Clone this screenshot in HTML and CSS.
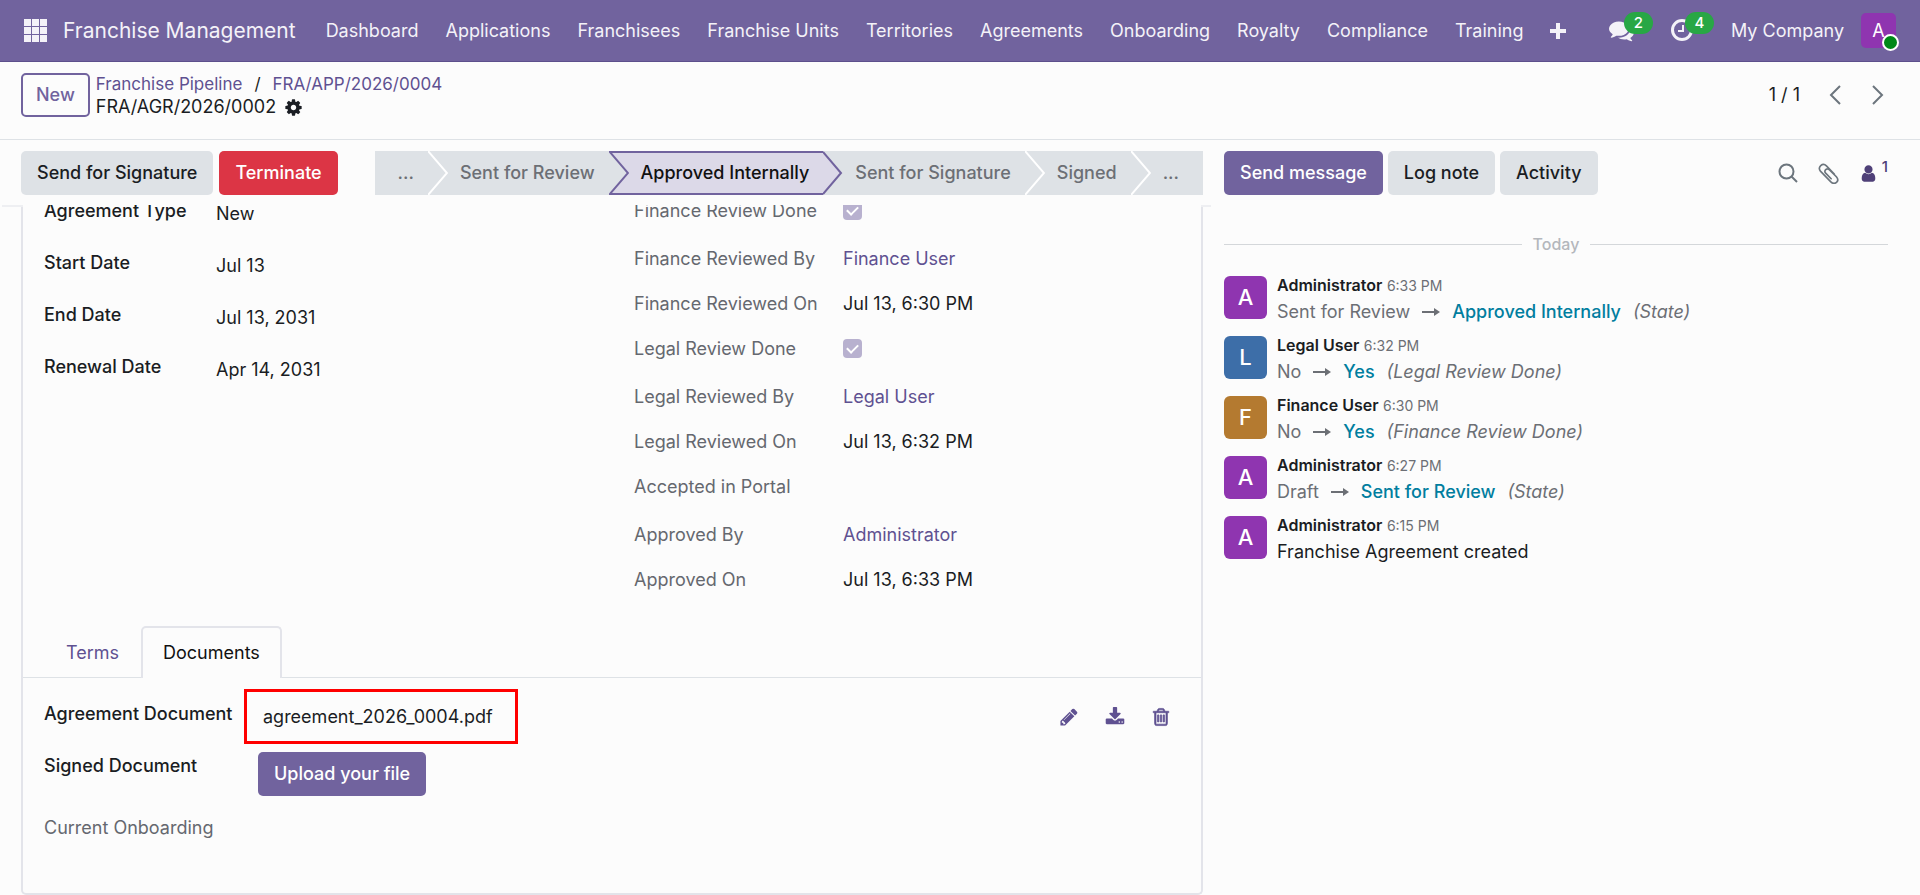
FILE: index.html
```html
<!DOCTYPE html>
<html lang="en">
<head>
  <meta charset="utf-8">
  <title>FRA/AGR/2026/0002 - Franchise Management</title>
  <link rel="stylesheet" href="styles.css">
</head>
<body>
  <header class="navbar">
    <button class="apps" aria-label="Apps">
      <svg width="23" height="23" viewBox="0 0 23 23" fill="currentColor"><path d="M0 0h7v7H0zM8 0h7v7H8zM16 0h7v7h-7zM0 8h7v7H0zM8 8h7v7H8zM16 8h7v7h-7zM0 16h7v7H0zM8 16h7v7H8zM16 16h7v7h-7z"/></svg>
    </button>
    <a class="brand" href="#">Franchise Management</a>
    <nav class="menu">
      <a href="#">Dashboard</a>
      <a href="#">Applications</a>
      <a href="#">Franchisees</a>
      <a href="#">Franchise Units</a>
      <a href="#">Territories</a>
      <a href="#">Agreements</a>
      <a href="#">Onboarding</a>
      <a href="#">Royalty</a>
      <a href="#">Compliance</a>
      <a href="#">Training</a>
      <button class="more" aria-label="More menus">
        <svg width="16" height="16" viewBox="0 0 16 16" fill="currentColor"><path d="M6 0h4v6h6v4h-6v6H6v-6H0V6h6z"/></svg>
      </button>
    </nav>
    <div class="systray">
      <button class="tray" aria-label="Messages">
        <svg width="25" height="25" viewBox="0 0 1792 1792" fill="currentColor"><path d="M1408 768q0 139-94 257t-256.5 186.5-353.5 68.5q-86 0-176-16-124 88-278 128-36 9-86 16h-3q-11 0-20.5-8t-11.5-21q-1-3-1-6.5t.5-6.5 2-6l2.5-5 3.5-5.5 4-5 4.5-5 4-4.5q5-6 23-25t26-29.5 22.5-29 25-38.5 20.5-44q-124-72-195-177t-71-224q0-139 94-257t256.5-186.5 353.5-68.5 353.5 68.5 256.5 186.5 94 257zm384 256q0 120-71 224.5t-195 176.5q10 24 20.5 44t25 38.5 22.5 29 26 29.5 23 25q1 1 4 4.5t4.5 5 4 5 3.5 5.5l2.5 5 2 6 .5 6.5-1 6.5q-3 14-13 22t-22 7q-50-7-86-16-154-40-278-128-90 16-176 16-271 0-472-132 58 4 88 4 161 0 309-45t264-129q125-92 192-212t67-254q0-77-23-152 129 71 204 178t75 230z"/></svg>
        <span class="badge">2</span>
      </button>
      <button class="tray" aria-label="Activities">
        <svg width="25" height="25" viewBox="0 0 25 25" fill="none" stroke="currentColor"><circle cx="12" cy="12" r="9.5" stroke-width="3"/><path d="M13 7v6H8" stroke-width="2"/></svg>
        <span class="badge">4</span>
      </button>
      <button class="company">My Company</button>
      <button class="user" aria-label="Administrator">A<span class="online"></span></button>
    </div>
  </header>

  <div class="control-panel">
    <button class="btn btn-outline">New</button>
    <div class="breadcrumb">
      <div class="crumbs"><a href="#">Franchise Pipeline</a><span>/</span><a href="#">FRA/APP/2026/0004</a></div>
      <div class="current">
        <span>FRA/AGR/2026/0002</span>
        <button class="gear" aria-label="Actions">
          <svg width="19" height="19" viewBox="0 0 1792 1792" fill="currentColor"><path d="M1152 896q0-106-75-181t-181-75-181 75-75 181 75 181 181 75 181-75 75-181zm512-109v222q0 12-8 23t-20 13l-185 28q-19 54-39 91 35 50 107 138 10 12 10 25t-9 23q-27 37-99 108t-94 71q-12 0-26-9l-138-108q-44 23-91 38-16 136-29 186-7 28-36 28h-222q-14 0-24.5-8.5t-11.5-21.5l-28-184q-49-16-90-37l-141 107q-10 9-25 9-14 0-25-11-126-114-165-168-7-10-7-23 0-12 8-23 15-21 51-66.5t54-70.5q-27-50-41-99l-183-27q-13-2-21-12.5t-8-23.5v-222q0-12 8-23t19-13l186-28q14-46 39-92-40-57-107-138-10-12-10-24 0-10 9-23 26-36 98.5-107.5t94.5-71.5q13 0 26 10l138 107q44-23 91-38 16-136 29-186 7-28 36-28h222q14 0 24.5 8.5t11.5 21.5l28 184q49 16 90 37l142-107q9-9 24-9 13 0 25 10 129 119 165 170 7 8 7 22 0 12-8 23-15 21-51 66.5t-54 70.5q26 50 41 98l183 28q13 2 21 12.5t8 23.5z"/></svg>
        </button>
      </div>
    </div>
    <div class="pager">
      <span>1 / 1</span>
      <button aria-label="Previous"><svg width="12" height="20" viewBox="0 0 12 20" fill="none" stroke="currentColor" stroke-width="2"><path d="M11 1L2 10l9 9"/></svg></button>
      <button aria-label="Next"><svg width="12" height="20" viewBox="0 0 12 20" fill="none" stroke="currentColor" stroke-width="2"><path d="M1 1l9 9-9 9"/></svg></button>
    </div>
  </div>

  <div class="content">
    <main class="form-view">
      <div class="statusbar">
        <button class="btn btn-light">Send for Signature</button>
        <button class="btn btn-danger">Terminate</button>
        <div class="stages">
          <button class="stage first">...<svg class="tip" width="20" height="44" viewBox="0 0 20 44"><path d="M0 0l19 22L0 44"/></svg></button>
          <button class="stage">Sent for Review</button>
          <button class="stage active"><svg class="tip tip-start" width="20" height="44" viewBox="0 0 20 44"><path d="M0 0l19 22L0 44"/></svg>Approved Internally<svg class="tip" width="20" height="44" viewBox="0 0 20 44"><path d="M0 1l18 21L0 43"/></svg></button>
          <button class="stage">Sent for Signature<svg class="tip" width="20" height="44" viewBox="0 0 20 44"><path d="M0 0l19 22L0 44"/></svg></button>
          <button class="stage">Signed<svg class="tip" width="20" height="44" viewBox="0 0 20 44"><path d="M0 0l19 22L0 44"/></svg></button>
          <button class="stage last">...</button>
        </div>
      </div>

      <div class="sheet">
        <div class="groups">
          <dl class="fields">
            <dt>Agreement Type</dt><dd>New</dd>
            <dt>Start Date</dt><dd>Jul 13</dd>
            <dt>End Date</dt><dd>Jul 13, 2031</dd>
            <dt>Renewal Date</dt><dd>Apr 14, 2031</dd>
          </dl>
          <div class="review">
            <div class="row tall">
              <label for="finance-done">Finance Review Done</label>
              <input type="checkbox" id="finance-done" checked disabled>
            </div>
            <div class="row"><span>Finance Reviewed By</span><a href="#">Finance User</a></div>
            <div class="row"><span>Finance Reviewed On</span><b>Jul 13, 6:30 PM</b></div>
            <div class="row tall">
              <label for="legal-done">Legal Review Done</label>
              <input type="checkbox" id="legal-done" checked disabled>
            </div>
            <div class="row"><span>Legal Reviewed By</span><a href="#">Legal User</a></div>
            <div class="row"><span>Legal Reviewed On</span><b>Jul 13, 6:32 PM</b></div>
            <div class="row tall"><span>Accepted in Portal</span></div>
            <div class="row"><span>Approved By</span><a href="#">Administrator</a></div>
            <div class="row"><span>Approved On</span><b>Jul 13, 6:33 PM</b></div>
          </div>
        </div>

        <div class="tabs" role="tablist">
          <button class="tab" role="tab">Terms</button>
          <button class="tab selected" role="tab">Documents</button>
        </div>

        <div class="documents">
          <div class="doc">
            <span class="doc-label">Agreement Document</span>
            <a class="file" href="#">agreement_2026_0004.pdf</a>
            <div class="doc-actions">
              <button aria-label="Edit"><svg width="20" height="20" viewBox="0 0 1792 1792" fill="currentColor"><path d="M491 1536l91-91-235-235-91 91v107h128v128h107zm523-928q0-22-22-22-10 0-17 7l-542 542q-7 7-7 17 0 22 22 22 10 0 17-7l542-542q7-7 7-17zm-54-192l416 416-832 832h-416v-416zm683 96q0 53-37 90l-166 166-416-416 166-165q36-38 90-38 53 0 91 38l235 234q37 39 37 91z"/></svg></button>
              <button aria-label="Download"><svg width="20" height="20" viewBox="0 0 1792 1792" fill="currentColor"><path d="M1344 1344q0-26-19-45t-45-19-45 19-19 45 19 45 45 19 45-19 19-45zm256 0q0-26-19-45t-45-19-45 19-19 45 19 45 45 19 45-19 19-45zm128-224v320q0 40-28 68t-68 28h-1472q-40 0-68-28t-28-68v-320q0-40 28-68t68-28h465l135 136q58 56 136 56t136-56l136-136h464q40 0 68 28t28 68zm-325-569q17 41-14 70l-448 448q-18 19-45 19t-45-19l-448-448q-31-29-14-70 17-39 59-39h256v-448q0-26 19-45t45-19h256q26 0 45 19t19 45v448h256q42 0 59 39z"/></svg></button>
              <button aria-label="Delete"><svg width="20" height="20" viewBox="0 0 1792 1792" fill="currentColor" stroke="currentColor" stroke-width="60"><path d="M704 736v576q0 14-9 23t-23 9h-64q-14 0-23-9t-9-23v-576q0-14 9-23t23-9h64q14 0 23 9t9 23zm256 0v576q0 14-9 23t-23 9h-64q-14 0-23-9t-9-23v-576q0-14 9-23t23-9h64q14 0 23 9t9 23zm256 0v576q0 14-9 23t-23 9h-64q-14 0-23-9t-9-23v-576q0-14 9-23t23-9h64q14 0 23 9t9 23zm128 724v-948h-896v948q0 22 7 40.5t14.5 27 10.5 8.5h832q3 0 10.5-8.5t14.5-27 7-40.5zm-672-1076h448l-48-117q-7-9-17-11h-317q-10 2-17 11zm928 32v64q0 14-9 23t-23 9h-96v948q0 83-47 143.5t-113 60.5h-832q-66 0-113-58.5t-47-141.5v-952h-96q-14 0-23-9t-9-23v-64q0-14 9-23t23-9h309l70-167q15-37 54-63t79-26h320q40 0 79 26t54 63l70 167h309q14 0 23 9t9 23z"/></svg></button>
            </div>
          </div>
          <div class="doc">
            <span class="doc-label">Signed Document</span>
            <button class="btn btn-primary upload">Upload your file</button>
          </div>
          <div class="doc">
            <span class="doc-label muted">Current Onboarding</span>
          </div>
        </div>
      </div>
    </main>

    <aside class="chatter">
      <div class="chatter-top">
        <button class="btn btn-primary">Send message</button>
        <button class="btn btn-light">Log note</button>
        <button class="btn btn-light">Activity</button>
        <div class="chatter-tools">
          <button aria-label="Search messages"><svg width="20" height="20" viewBox="0 0 20 20" fill="none" stroke="currentColor" stroke-width="2"><circle cx="8.5" cy="8.5" r="7"/><path d="M13.5 13.5l5.5 5.5"/></svg></button>
          <button aria-label="Attach files"><svg width="21" height="21" viewBox="0 0 20 20" fill="none" stroke="currentColor" stroke-width="1.6" stroke-linecap="round"><path d="M15.5 10.5L8 2.8C4.500-.8-1 4 2.3 7.700l9.700 10c4.200 4 9-.5 5.500-4.600L11 6.600C8.500 4.200 5 7.200 7.300 9.700l5.200 5.300"/></svg></button>
          <button class="followers" aria-label="Followers"><svg width="19" height="19" viewBox="0 0 1792 1792" fill="currentColor"><path d="M1536 1399q0 109-62.5 187t-150.5 78h-854q-88 0-150.5-78t-62.5-187q0-85 8.5-160.5t31.5-152 58.5-131 94-89 134.5-34.5q131 128 313 128t313-128q76 0 134.5 34.5t94 89 58.5 131 31.5 152 8.5 160.5zm-256-887q0 159-112.5 271.5t-271.5 112.5-271.5-112.5-112.5-271.5 112.5-271.5 271.5-112.5 271.5 112.5 112.5 271.5z"/></svg><sup>1</sup></button>
        </div>
      </div>

      <div class="day">Today</div>

      <article class="message">
        <span class="avatar">A</span>
        <div>
          <p class="author"><strong>Administrator</strong> <time>6:33 PM</time></p>
          <p class="change"><span>Sent for Review</span><svg class="arrow" width="18" height="10" viewBox="0 0 18 10"><path d="M0 4h12V1l6 4-6 4V6H0z"/></svg><strong>Approved Internally</strong><em>(State)</em></p>
        </div>
      </article>
      <article class="message">
        <span class="avatar blue">L</span>
        <div>
          <p class="author"><strong>Legal User</strong> <time>6:32 PM</time></p>
          <p class="change"><span>No</span><svg class="arrow" width="18" height="10" viewBox="0 0 18 10"><path d="M0 4h12V1l6 4-6 4V6H0z"/></svg><strong>Yes</strong><em>(Legal Review Done)</em></p>
        </div>
      </article>
      <article class="message">
        <span class="avatar brown">F</span>
        <div>
          <p class="author"><strong>Finance User</strong> <time>6:30 PM</time></p>
          <p class="change"><span>No</span><svg class="arrow" width="18" height="10" viewBox="0 0 18 10"><path d="M0 4h12V1l6 4-6 4V6H0z"/></svg><strong>Yes</strong><em>(Finance Review Done)</em></p>
        </div>
      </article>
      <article class="message">
        <span class="avatar">A</span>
        <div>
          <p class="author"><strong>Administrator</strong> <time>6:27 PM</time></p>
          <p class="change"><span>Draft</span><svg class="arrow" width="18" height="10" viewBox="0 0 18 10"><path d="M0 4h12V1l6 4-6 4V6H0z"/></svg><strong>Sent for Review</strong><em>(State)</em></p>
        </div>
      </article>
      <article class="message">
        <span class="avatar">A</span>
        <div>
          <p class="author"><strong>Administrator</strong> <time>6:15 PM</time></p>
          <p class="note">Franchise Agreement created</p>
        </div>
      </article>
    </aside>
  </div>
</body>
</html>
```
FILE: styles.css
```css
* {
  box-sizing: border-box;
}

body {
  margin: 0;
  min-height: 100vh;
  display: flex;
  flex-direction: column;
  font-family: Inter, "Liberation Sans", sans-serif;
  font-size: 18px;
  line-height: 24px;
  color: #1a1d23;
  background: #fcfcfc;
}

a {
  color: #5f5191;
  text-decoration: none;
}

button {
  font: inherit;
  color: inherit;
  background: none;
  border: 0;
  padding: 0;
  cursor: pointer;
}

svg {
  display: block;
}

p, dl, dd {
  margin: 0;
}

/* top bar */
.navbar {
  height: 62px;
  display: flex;
  align-items: center;
  padding: 0 24px;
  color: #f4f2f8;
  background: #71639e;
  border-bottom: 1px solid #5d4f8c;
}

.navbar a {
  color: inherit;
}

.apps {
  margin-right: 16px;
}

.brand {
  font-size: 21px;
  margin-right: 30px;
}

.menu {
  display: flex;
  align-items: center;
  gap: 27px;
}

.systray {
  display: flex;
  align-items: center;
  margin-left: auto;
}

.tray {
  position: relative;
  margin-right: 36px;
}

.badge {
  position: absolute;
  left: 15px;
  top: -6px;
  width: 29px;
  height: 22px;
  border-radius: 11px;
  background: #28a745;
  color: #fff;
  font-size: 15px;
  font-weight: 500;
  line-height: 22px;
  text-align: center;
}

.company {
  margin-right: 17px;
}

.user {
  position: relative;
  width: 35px;
  height: 35px;
  border-radius: 5px;
  background: #8f35b0;
  color: #fff;
}

.online {
  position: absolute;
  right: -3px;
  bottom: -3px;
  width: 17px;
  height: 17px;
  border: 2px solid #fff;
  border-radius: 50%;
  background: #008818;
}

/* breadcrumb row */
.control-panel {
  height: 78px;
  display: flex;
  align-items: flex-start;
  gap: 6px;
  padding: 11px 34px 0 21px;
  border-bottom: 1px solid #dee2e6;
}

.btn {
  height: 44px;
  padding: 0 16px;
  border: 0;
  border-radius: 5px;
  font-weight: 500;
  white-space: nowrap;
}

.btn-outline {
  padding: 0 13px;
  border: 2px solid #71639e;
  color: #71639e;
}

.btn-light {
  background: #dee2e6;
}

.btn-danger {
  background: #dc3545;
  color: #fff;
}

.btn-primary {
  background: #71639e;
  color: #fff;
}

.crumbs {
  display: flex;
  gap: 12px;
  font-size: 17px;
  line-height: 22px;
}

.current {
  display: flex;
  align-items: center;
  gap: 8px;
}

.pager {
  display: flex;
  align-items: center;
  gap: 26px;
  height: 44px;
  margin-left: auto;
}

.pager button {
  width: 17px;
  display: grid;
  place-items: center;
  color: #6c757d;
}

/* form */
.content {
  flex: 1;
  display: grid;
  grid-template-columns: 1203fr 717fr;
}

.form-view {
  display: flex;
  flex-direction: column;
  padding-left: 21px;
}

.statusbar {
  display: flex;
  gap: 6px;
  height: 65px;
  padding-top: 11px;
}

.stages {
  display: flex;
  margin-left: auto;
  height: 44px;
}

.stage {
  position: relative;
  padding: 0 14px 0 32px;
  background: #dee2e6;
  color: #6c6f75;
  font-weight: 500;
}

.stage.first {
  padding-left: 23px;
}

.stage.last {
  padding-right: 24px;
}

.stage.active {
  color: #111;
  background: #dcd9e8;
  border: solid #71639e;
  border-width: 2px 0;
}

.tip {
  position: absolute;
  left: 100%;
  top: 0;
  z-index: 1;
  fill: #dee2e6;
  stroke: #fff;
  stroke-width: 2;
}

.active .tip {
  top: -2px;
  fill: #dcd9e8;
  stroke: #71639e;
}

.active .tip-start {
  left: 0;
  fill: #dee2e6;
}

.sheet {
  position: relative;
  flex: 1;
  border: 2px solid #e3e4ea;
  border-top: 0;
  border-radius: 0 0 5px 5px;
}

/* edge of the scrolled area on both sides of the sheet */
.sheet::before,
.sheet::after {
  content: "";
  position: absolute;
  top: 0;
  height: 2px;
  background: #eeeff2;
}

.sheet::before {
  right: 100%;
  width: 21px;
}

.sheet::after {
  left: 100%;
  width: 10px;
}

.groups {
  display: grid;
  grid-template-columns: 590px 1fr;
  height: 421px;
  padding-left: 21px;
  overflow: hidden;
}

.fields {
  display: grid;
  grid-template-columns: 172px 1fr;
  grid-auto-rows: 52px;
  margin-top: -6px;
}

.fields dt {
  font-weight: 500;
}

.fields dd {
  padding-top: 3px;
}

.review {
  margin-top: -6px;
}

.row {
  display: grid;
  grid-template-columns: 209px 1fr;
  height: 45px;
}

.row.tall {
  height: 48px;
}

.row span,
.row label {
  color: #65686f;
}

.row b {
  font-weight: 400;
}

.row input {
  appearance: none;
  width: 19px;
  height: 19px;
  margin: 2px 0;
  border-radius: 4px;
  background: #b8b1cf;
  display: grid;
  place-items: center;
}

.row input::after {
  content: "";
  width: 9px;
  height: 5px;
  border: solid #fff;
  border-width: 0 0 2px 2px;
  transform: translateY(-1px) rotate(-45deg);
}

.tabs {
  display: flex;
  height: 52px;
  padding-left: 21px;
  box-shadow: inset 0 -1px #dee2e6;
}

.tab {
  padding: 0 20px;
  border: 2px solid transparent;
  border-bottom: 0;
  color: #5f5191;
}

.tab.selected {
  color: #111;
  background: #fcfcfc;
  border-color: #e3e4ea;
  border-radius: 5px 5px 0 0;
}

.documents {
  padding: 11px 21px 0;
}

.doc {
  display: flex;
  align-items: flex-start;
  height: 52px;
}

.doc-label {
  width: 200px;
  padding-top: 13px;
  font-weight: 500;
  white-space: nowrap;
}

.doc-label.muted {
  padding-top: 23px;
  font-weight: 400;
  color: #65686f;
}

.file {
  height: 55px;
  min-width: 274px;
  padding: 13px 16px;
  border: 3px solid #f00;
  color: inherit;
}

.upload {
  margin: 11px 0 0 14px;
}

.doc-actions {
  display: flex;
  gap: 26px;
  margin: 18px 9px 0 auto;
  color: #5f5191;
}

/* chatter */
.chatter {
  padding: 11px 32px 0 21px;
}

.chatter-top {
  display: flex;
  gap: 5px;
}

.chatter-tools {
  display: flex;
  align-items: center;
  gap: 20px;
  margin-left: auto;
  color: #6c757d;
}

.followers {
  display: flex;
  align-items: center;
  gap: 4px;
  color: #4f4078;
}

.followers sup {
  font-size: 15px;
  font-weight: 500;
  line-height: 20px;
  height: 32px;
}

.day {
  display: flex;
  align-items: center;
  gap: 11px;
  margin: 37px 0 20px;
  font-size: 16px;
  font-weight: 500;
  color: #b4b7bc;
}

.day::before,
.day::after {
  content: "";
  flex: 1;
  height: 1px;
  background: #d4d7da;
}

.message {
  display: flex;
  gap: 10px;
  height: 60px;
}

.avatar {
  width: 43px;
  height: 43px;
  border-radius: 6px;
  background: #8f35b0;
  color: #fff;
  font-size: 22px;
  font-weight: 500;
  line-height: 43px;
  text-align: center;
}

.avatar.blue {
  background: #3d6ea8;
}

.avatar.brown {
  background: #b47a30;
}

.author {
  font-size: 16px;
  line-height: 18px;
}

.author strong {
  font-weight: 600;
}

.author time {
  font-size: 14px;
  color: #6c6f75;
}

.change {
  display: flex;
  align-items: center;
  line-height: 34px;
  color: #6c6f75;
}

.change strong {
  font-weight: 500;
  color: #017e9f;
}

.change em {
  margin-left: 12px;
}

.arrow {
  margin: 0 12px;
  fill: currentColor;
}

.note {
  line-height: 34px;
}
```
